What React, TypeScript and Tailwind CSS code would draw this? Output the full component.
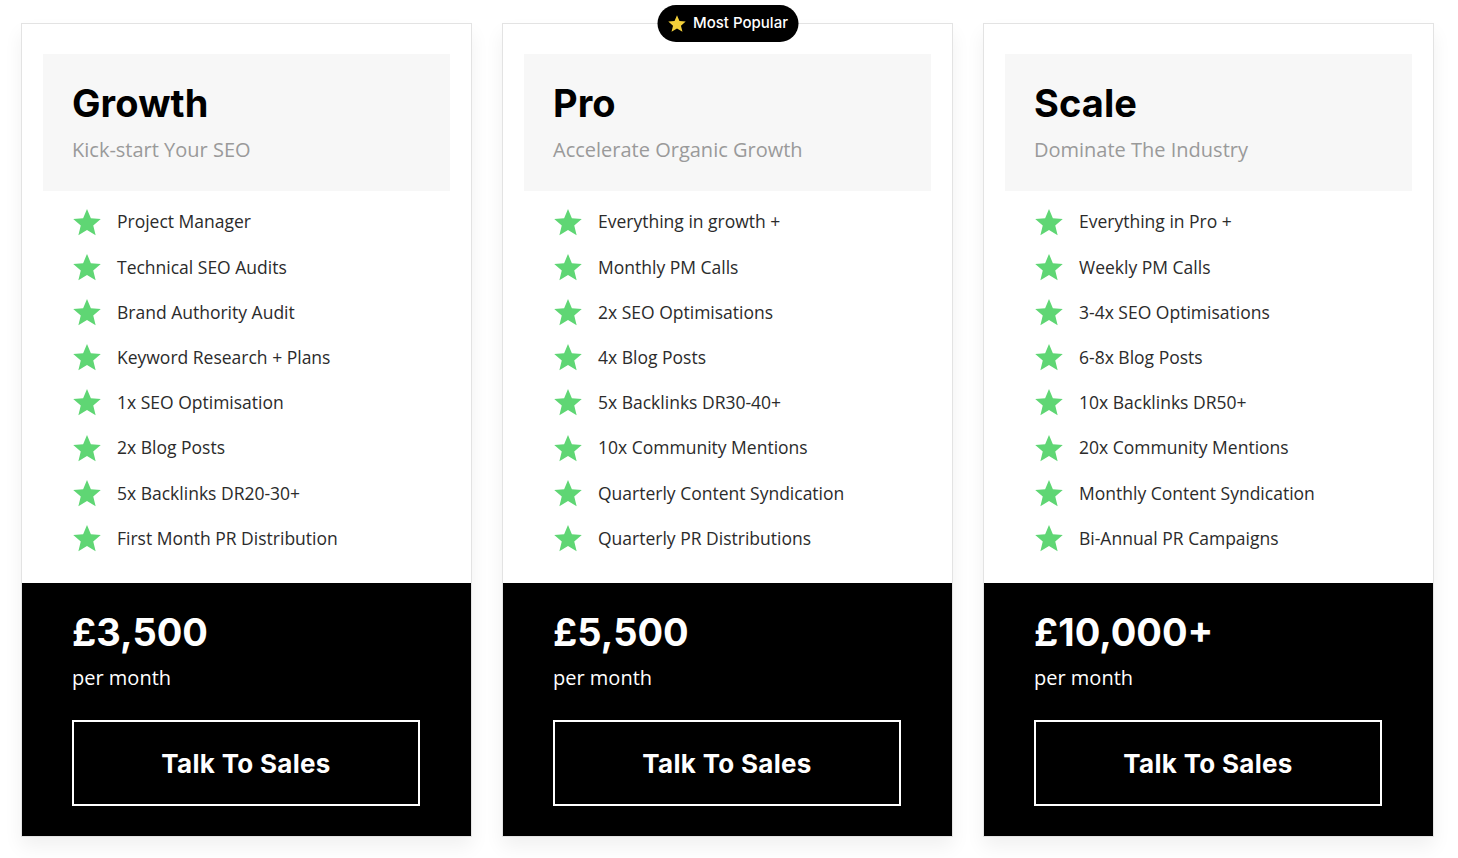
import React from "react";

interface Plan {
  name: string;
  tagline: string;
  features: string[];
  price: string;
  popular?: boolean;
}

const plans: Plan[] = [
  {
    name: "Growth",
    tagline: "Kick-start Your SEO",
    features: [
      "Project Manager",
      "Technical SEO Audits",
      "Brand Authority Audit",
      "Keyword Research + Plans",
      "1x SEO Optimisation",
      "2x Blog Posts",
      "5x Backlinks DR20-30+",
      "First Month PR Distribution",
    ],
    price: "£3,500",
  },
  {
    name: "Pro",
    tagline: "Accelerate Organic Growth",
    features: [
      "Everything in growth +",
      "Monthly PM Calls",
      "2x SEO Optimisations",
      "4x Blog Posts",
      "5x Backlinks DR30-40+",
      "10x Community Mentions",
      "Quarterly Content Syndication",
      "Quarterly PR Distributions",
    ],
    price: "£5,500",
    popular: true,
  },
  {
    name: "Scale",
    tagline: "Dominate The Industry",
    features: [
      "Everything in Pro +",
      "Weekly PM Calls",
      "3-4x SEO Optimisations",
      "6-8x Blog Posts",
      "10x Backlinks DR50+",
      "20x Community Mentions",
      "Monthly Content Syndication",
      "Bi-Annual PR Campaigns",
    ],
    price: "£10,000+",
  },
];

const heading = { fontFamily: "Inter, 'Liberation Sans', sans-serif" };
const body = { fontFamily: "'Open Sans', 'Liberation Sans', sans-serif" };

const Star = ({ className, color }: { className: string; color: string }) => (
  <svg viewBox="0 0 24 24" className={className}>
    <path
      fill={color}
      d="M12 1.5l3.1 7.4 7.9.6-6 5.2 1.9 7.8L12 18.3l-6.9 4.2L7 14.7 1 9.5l7.9-.6z"
    />
  </svg>
);

const PlanCard = ({ name, tagline, features, price, popular }: Plan) => {
  return (
    <div className="relative flex w-[451px] flex-col border border-[#e3e3e3] bg-white shadow-[0_10px_18px_rgba(0,0,0,0.06)]">
      {popular && (
        <div
          className="absolute left-1/2 top-[-19px] flex h-[37px] w-[141px] -translate-x-1/2 items-center justify-center gap-[7px] rounded-full bg-black text-[15px] font-medium text-white"
          style={heading}
        >
          <Star className="h-[19px] w-[19px]" color="#f2cf3a" />
          <span>Most Popular</span>
        </div>
      )}

      <div className="px-[21px] pt-[30px]">
        <div className="h-[137px] bg-[#f7f7f7] px-[29px] pt-[26px]">
          <h3
            className="text-[38px] font-bold leading-[46px] tracking-[0.1px] text-black"
            style={heading}
          >
            {name}
          </h3>
          <p className="mt-[11px] text-[20px] leading-[26px] text-[#9a9a9a]" style={body}>
            {tagline}
          </p>
        </div>
      </div>

      <ul className="flex h-[392px] flex-col px-[50px] pt-[8px]">
        {features.map((f) => (
          <li key={f} className="flex h-[45.2px] items-center gap-[15px]">
            <Star className="h-[30px] w-[30px] shrink-0" color="#5fd674" />
            <span className="text-[17.5px] text-[#2b2b2b]" style={body}>
              {f}
            </span>
          </li>
        ))}
      </ul>

      <div className="flex h-[253px] flex-col bg-black px-[50px] pt-[25px]">
        <div
          className="text-[38px] font-bold leading-[48px] text-white"
          style={heading}
        >
          {price}
        </div>
        <div className="mt-[9px] text-[20px] leading-[26px] text-white" style={body}>
          per month
        </div>
        <button
          className="mt-[29px] flex h-[86px] w-[348px] items-center justify-center border-2 border-white text-[26px] font-bold tracking-[0.3px] text-white"
          style={heading}
        >
          Talk To Sales
        </button>
      </div>
    </div>
  );
};

export default function App() {
  return (
    <div className="min-h-[858px] w-[1458px] bg-white">
      <div className="flex gap-[30px] pl-[21px] pt-[23px]">
        {plans.map((p) => (
          <PlanCard key={p.name} {...p} />
        ))}
      </div>
    </div>
  );
}
